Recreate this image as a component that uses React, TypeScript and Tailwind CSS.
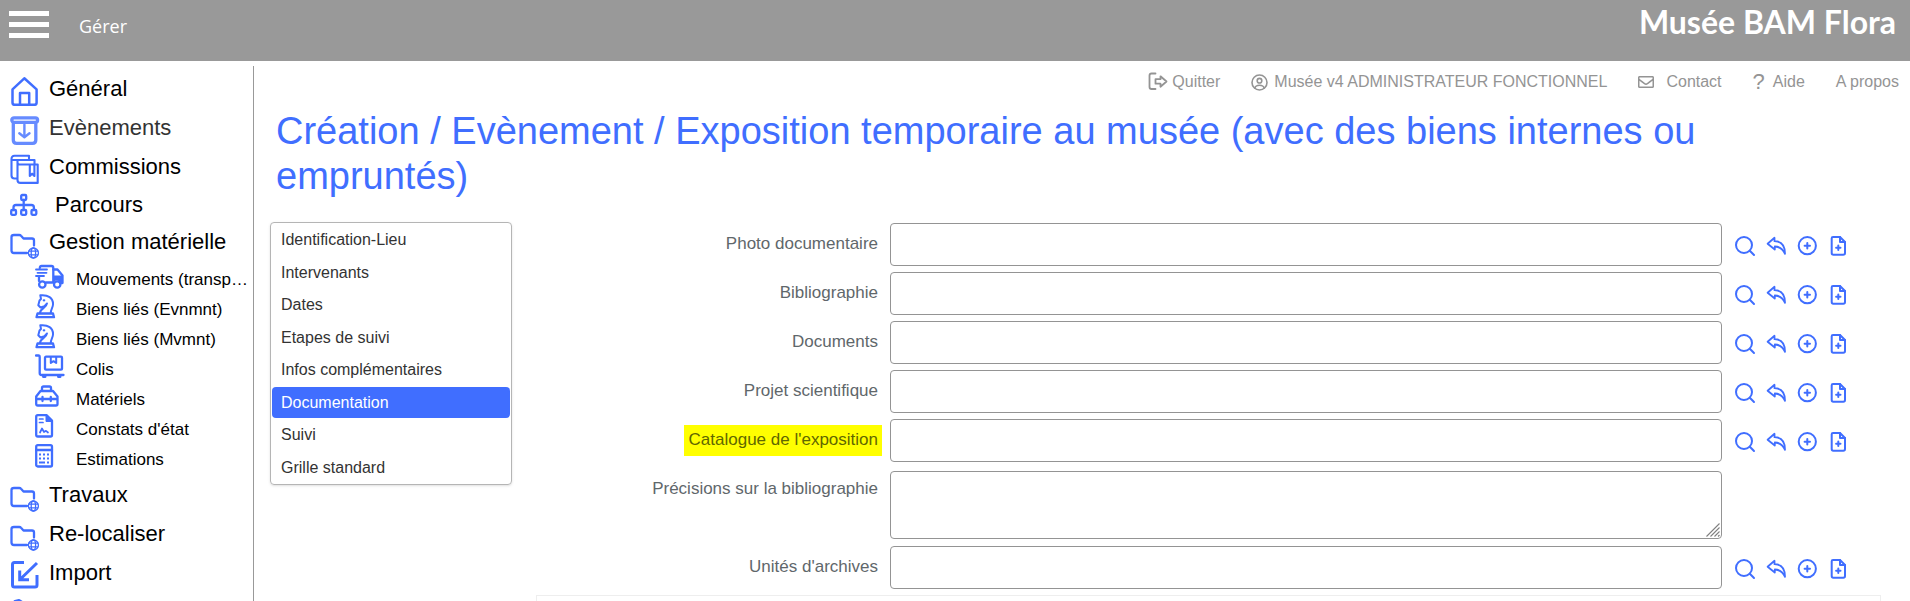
import type { ReactNode } from "react";
import { FaRegEnvelope } from "react-icons/fa";

type IconProps = { children: ReactNode; className?: string; box?: string; stroke?: number };

function Icon({ children, className = "size-[30px]", box = "0 0 30 30", stroke = 2.3 }: IconProps) {
  return (
    <svg
      viewBox={box}
      className={`${className} shrink-0`}
      fill="none"
      stroke="currentColor"
      strokeWidth={stroke}
      strokeLinecap="round"
      strokeLinejoin="round"
      aria-hidden="true"
    >
      {children}
    </svg>
  );
}

const HomeIcon = () => (
  <Icon stroke={2.5}>
    <path d="M14.3 2.3 2.5 13.4V26.5q0 2.300 2.300 2.300H24.300q2.300 0 2.300-2.300V13.400z" />
    <path d="M10 28.500V17h9.200v11.500" />
  </Icon>
);

const EventIcon = () => (
  <Icon stroke={3.3}>
    <rect x="1.800" y="2.800" width="25.800" height="4.500" rx="2.200" />
    <path d="M3.300 8V25q0 3.300 3.300 3.300H22.500q3.300 0 3.300-3.300V8" />
    <path d="M14.400 9.500V22M9.300 18.300l5.100 4 5.100-4" strokeWidth={2.400} />
  </Icon>
);

const BooksIcon = () => (
  <Icon stroke={2.1}>
    <path d="M19 4.500V1.800H4.500Q1.500 1.800 1.500 5V21.500Q1.500 24.500 4.500 24.500H7" />
    <path d="M2.500 6H24.500V10" />
    <path d="M7.500 8.500V26Q7.500 28.900 10.500 28.900H27.700V10.500H9.500Q7.500 10.500 7.500 8.500V6" />
    <path d="M19.800 11V22l2.300-2.300 2.300 2.300V11" />
  </Icon>
);

const TreeIcon = () => (
  <Icon>
    <rect x="11.200" y="3" width="5" height="5" rx="1" />
    <rect x="1.200" y="18" width="4.800" height="4.800" rx="1" />
    <rect x="11.200" y="18" width="5" height="4.800" rx="1" />
    <rect x="21.500" y="18" width="4.800" height="4.800" rx="1" />
    <path d="M13.700 8v10M3.500 18v-2.500q0-2.500 2.500-2.500h15.400q2.500 0 2.500 2.500V18" />
  </Icon>
);

const FolderIcon = () => (
  <Icon>
    <path d="M17 24H4Q1.500 24 1.500 21.500V8Q1.500 6 4 6H9.200Q10.300 6 11 6.800L13.500 9.500H22Q24 9.500 24 11.500V16.500" />
    <g strokeWidth={1.300}>
      <circle cx="23.400" cy="24" r="5" />
      <ellipse cx="23.400" cy="24" rx="2.200" ry="5" />
      <path d="M18.900 22.200h9M18.900 25.800h9" />
    </g>
  </Icon>
);

const ImportIcon = () => (
  <Icon stroke={3}>
    <path d="M14 2.500H4.500Q2.500 2.500 2.500 4.500V25Q2.500 27 4.500 27H25Q27 27 27 25V15" strokeLinecap="butt" />
    <path d="M27 3 10.500 19M9.700 10.500V19.800H19" strokeLinecap="butt" strokeLinejoin="miter" />
  </Icon>
);

const WrenchIcon = () => (
  <Icon stroke={3}>
    <path d="M5 2.500 9 1.500 13 4 16 10 26 20 21 26 10 15 6 13z" />
  </Icon>
);

const SubIcon = ({ children }: { children: ReactNode }) => (
  <Icon className="h-[26px] w-[30px]" box="0 0 30 26">
    {children}
  </Icon>
);

const TruckIcon = () => (
  <SubIcon>
    <path d="M4.800 4Q5 2 6.500 2H16.500Q18.300 2 18.300 4V18.500H11" />
    <path d="M18.300 5.500H22.500L27.500 11.500V19H26" />
    <path d="M19 11.500H27.500V18.500H25A3.500 3.500 0 0 0 19 18z" fill="currentColor" stroke="none" />
    <path d="M1 5.500H12M2.500 8.800H11.500M1 12H9" strokeWidth={1.800} />
    <path d="M4 13V17" />
    <circle cx="7.300" cy="20.500" r="3.200" />
    <circle cx="22.200" cy="20.500" r="3.200" />
  </SubIcon>
);

const KnightIcon = () => (
  <SubIcon>
    <path d="M1.500 23.200 2.500 19.500H18L19 23.200z" />
    <path d="M5 19C5 14.500 11.500 14 12 9.500L9.500 12.200 5.500 13.500 3.300 11.300 4.500 6.500 6 5 5.300 1.300C13 .5 18.300 4 18 10.500 17.900 13.500 15.800 15 15.800 19" strokeWidth={2} />
    <path d="M8.800 6.300h.4" />
  </SubIcon>
);

const TrolleyIcon = () => (
  <SubIcon>
    <path d="M1 1.500H3.500Q4.700 1.500 4.700 3V19Q4.700 21 6.500 21H28.500" />
    <rect x="10" y="2.700" width="17" height="13" rx="1" />
    <path d="M15.800 3V9l2.700-1.800L21.200 9V3" strokeWidth={2} />
    <path d="M8.500 22.500h1.500M23.500 22.500h1.500" strokeWidth={3} />
  </SubIcon>
);

const ToolboxIcon = () => (
  <SubIcon>
    <path d="M7 6.500V4Q7 2.500 8.500 2.500H14.500Q16 2.500 16 4V6.500" />
    <path d="M1.200 20V12.500L5.500 7H18L22.500 12.500V20Q22.500 21.500 21 21.500H2.700Q1.200 21.500 1.200 20z" />
    <path d="M1.500 15H22M7.500 13V17M15.800 13V17" />
  </SubIcon>
);

const ReportIcon = () => (
  <SubIcon>
    <path d="M2.700 1.200H11.500L17 6.500V21Q17 22.500 15.500 22.500H2.700Q1.200 22.500 1.200 21V2.700Q1.200 1.200 2.700 1.200z" />
    <path d="M11 1V7.500H17z" fill="currentColor" strokeWidth={1} />
    <path d="M4.500 5H8M4.500 8.500H8M5 18.500 7 14.500 9 18 11 16.800 13 18.500" strokeWidth={1.700} />
  </SubIcon>
);

const CalculatorIcon = () => (
  <SubIcon>
    <rect x="1.200" y="1.200" width="15.800" height="21.300" rx="1.500" />
    <path d="M1 6H17" />
    <path d="M4 10.500h2M8 10.500h2M12 10.500h2M4 14.500h2M8 14.500h2M12 14.500h2M4 18.500h6M12 18.500h2" strokeWidth={2} strokeLinecap="butt" />
  </SubIcon>
);

type MainItem = { label: string; icon: ReactNode; color: string; iconColor: string; height: string; indent: string };

const mainTop: MainItem[] = [
  { label: "Général", icon: <HomeIcon />, color: "text-black", iconColor: "text-[#406eff]", height: "h-[39px]", indent: "" },
  { label: "Evènements", icon: <EventIcon />, color: "text-[#333333]", iconColor: "text-[#668bff]", height: "h-[39px]", indent: "" },
  { label: "Commissions", icon: <BooksIcon />, color: "text-black", iconColor: "text-[#406eff]", height: "h-[39px]", indent: "" },
  { label: "Parcours", icon: <TreeIcon />, color: "text-black", iconColor: "text-[#406eff]", height: "h-[37px]", indent: "pl-1.5" },
  { label: "Gestion matérielle", icon: <FolderIcon />, color: "text-black", iconColor: "text-[#406eff]", height: "h-[38px]", indent: "" },
];

const mainBottom: MainItem[] = [
  { label: "Travaux", icon: <FolderIcon />, color: "text-black", iconColor: "text-[#406eff]", height: "h-[39px]", indent: "" },
  { label: "Re-localiser", icon: <FolderIcon />, color: "text-black", iconColor: "text-[#406eff]", height: "h-[39px]", indent: "" },
  { label: "Import", icon: <ImportIcon />, color: "text-black", iconColor: "text-[#406eff]", height: "h-[39px]", indent: "" },
];

const subItems = [
  { label: "Mouvements (transp…", icon: <TruckIcon /> },
  { label: "Biens liés (Evnmnt)", icon: <KnightIcon /> },
  { label: "Biens liés (Mvmnt)", icon: <KnightIcon /> },
  { label: "Colis", icon: <TrolleyIcon /> },
  { label: "Matériels", icon: <ToolboxIcon /> },
  { label: "Constats d'état", icon: <ReportIcon /> },
  { label: "Estimations", icon: <CalculatorIcon /> },
];

function MainLink({ item }: { item: MainItem }) {
  return (
    <a href="#" className={`flex items-center gap-[9px] pl-2.5 text-[22px] leading-7 whitespace-nowrap ${item.height} ${item.color}`}>
      <span className={`shrink-0 pt-1 ${item.iconColor}`}>{item.icon}</span>
      <span className={item.indent}>{item.label}</span>
    </a>
  );
}

function Sidebar() {
  return (
    <nav aria-label="Menu principal" className="mt-[5px] w-[254px] shrink-0 overflow-hidden border-r border-[#999999] pt-[3px]">
      {mainTop.map((item) => (
        <MainLink key={item.label} item={item} />
      ))}
      <div className="pt-1">
        {subItems.map((item) => (
          <a key={item.label} href="#" className="flex h-[30px] items-center gap-[11px] pl-[35px] text-[17px] leading-6 whitespace-nowrap text-black">
            <span className="shrink-0 pb-1.5 text-[#406eff]">{item.icon}</span>
            <span>{item.label}</span>
          </a>
        ))}
      </div>
      {mainBottom.map((item) => (
        <MainLink key={item.label} item={item} />
      ))}
      <a href="#" aria-label="Outils" className="flex h-[39px] items-center pt-1 pl-2.5 text-[#406eff]">
        <WrenchIcon />
      </a>
    </nav>
  );
}

function TopLinks() {
  return (
    <nav aria-label="Liens utilisateur" className="flex h-[42px] items-center justify-end gap-[31px] pr-[11px] text-[16px] leading-6 whitespace-nowrap text-[#949494]">
      <a href="#" className="flex items-center gap-1">
        <Icon className="h-5 w-5" box="0 0 20 20" stroke={1.800}>
          <path d="M7.500 1.500H3.500Q1.500 1.500 1.500 3.500V15Q1.500 17 3.500 17H7.500" />
          <path d="M7.500 7.200H12.500V4.300L18.500 9.500 12.500 14.700V11.700H7.500z" />
        </Icon>
        Quitter
      </a>
      <a href="#" className="flex items-center gap-1.5">
        <Icon className="size-[17px]" box="0 0 17 17" stroke={1.600}>
          <circle cx="8.500" cy="8.500" r="7.500" />
          <circle cx="8.500" cy="6.700" r="2.300" />
          <path d="M3.800 14.200C4.500 11.500 6 11.200 8.500 11.200S12.500 11.500 13.200 14.200" />
        </Icon>
        Musée v4 ADMINISTRATEUR FONCTIONNEL
      </a>
      <a href="#" className="flex items-center gap-3">
        <FaRegEnvelope className="size-4" aria-hidden="true" />
        Contact
      </a>
      <a href="#" className="flex items-center gap-2">
        <span className="text-[22px]" aria-hidden="true">?</span>
        Aide
      </a>
      <a href="#">A propos</a>
    </nav>
  );
}

const tabs = ["Identification-Lieu", "Intervenants", "Dates", "Etapes de suivi", "Infos complémentaires", "Documentation", "Suivi", "Grille standard"];

function SectionList() {
  return (
    <ul className="flex h-[263px] w-[242px] shrink-0 flex-col justify-between rounded border border-[#b5b5b5] p-px shadow-sm">
      {tabs.map((tab) => (
        <li key={tab}>
          <button
            type="button"
            className={`block h-[31px] w-full rounded px-[9px] pt-px text-left text-[16px] leading-6 ${
              tab === "Documentation" ? "bg-[#406eff] text-white" : "text-[#333333]"
            }`}
          >
            {tab}
          </button>
        </li>
      ))}
    </ul>
  );
}

const actions = [
  {
    name: "Rechercher",
    icon: (
      <>
        <circle cx="10" cy="10" r="8" />
        <path d="m15.800 15.800 4.200 4.200" />
      </>
    ),
  },
  {
    name: "Rétablir",
    icon: <path d="M2.600 8.800 9.500 2.800V6.200C16 6.200 20 10.500 20 18.800 18 14.500 15 11.500 9.800 11.500V14.500z" strokeWidth={1.800} />,
  },
  {
    name: "Ajouter",
    icon: (
      <>
        <circle cx="11.300" cy="10.700" r="8.600" />
        <path d="M11.300 8v5.400M8.600 10.700h5.400" />
      </>
    ),
  },
  {
    name: "Nouvelle fiche",
    icon: (
      <>
        <path d="M6 2H13L18 7V18Q18 19.700 16.300 19.700H6.300Q4.700 19.700 4.700 18V3.300Q4.700 2 6 2z" />
        <path d="M13 2V7H18" />
        <path d="M11.300 10.500v4.400M9.100 12.700h4.400" />
      </>
    ),
  },
];

type FieldDef = { id: string; label: string; highlight?: boolean; multiline?: boolean };

const fields: FieldDef[] = [
  { id: "photo", label: "Photo documentaire" },
  { id: "biblio", label: "Bibliographie" },
  { id: "docs", label: "Documents" },
  { id: "projet", label: "Projet scientifique" },
  { id: "catalogue", label: "Catalogue de l'exposition", highlight: true },
  { id: "precisions", label: "Précisions sur la bibliographie", multiline: true },
  { id: "unites", label: "Unités d'archives" },
];

function Field({ field }: { field: FieldDef }) {
  return (
    <div className={`flex items-start ${field.multiline ? "pt-[3px] pb-px" : ""}`}>
      <div className={`flex w-[346px] shrink-0 justify-end ${field.multiline ? "pt-[3px]" : "pt-1.5"}`}>
        <label
          htmlFor={field.id}
          className={`block pt-px pr-1 pb-0.5 pl-[5px] text-[17px] leading-7 whitespace-nowrap ${
            field.highlight ? "bg-[#ffff00] text-[#5f6700]" : "text-[#5f676b]"
          }`}
        >
          {field.label}
        </label>
      </div>
      {field.multiline ? (
        <div className="relative ml-2 min-w-0 flex-1">
          <textarea id={field.id} className="block h-[68px] w-full resize-none rounded border border-[#949494] px-2 py-1 text-[17px]" />
          <svg viewBox="0 0 14 14" className="pointer-events-none absolute right-0.5 bottom-0.5 size-3.5 text-[#808080]" stroke="currentColor" strokeWidth={1.100} aria-hidden="true">
            <path d="M.5 13.500 13.500.5M4.500 13.500 13.500 4.500M8.500 13.500 13.500 8.500M12 13.500 13.500 12" />
          </svg>
        </div>
      ) : (
        <input id={field.id} type="text" className="ml-2 block h-[43px] min-w-0 flex-1 rounded border border-[#949494] px-2 text-[17px]" />
      )}
      <div className="flex h-[43px] w-[159px] shrink-0 items-center gap-[9px] pt-[3px] pl-3 text-[#406eff]">
        {!field.multiline &&
          actions.map((action) => (
            <button key={action.name} type="button" aria-label={`${action.name} : ${field.label}`}>
              <Icon className="size-[22px]" box="0 0 22 22" stroke={2}>
                {action.icon}
              </Icon>
            </button>
          ))}
      </div>
    </div>
  );
}

export default function App() {
  return (
    <div className="flex h-screen flex-col overflow-hidden bg-white font-['Liberation_Sans',Arial,sans-serif]">
      <header className="flex h-[61px] shrink-0 items-start justify-between bg-[#999999] pr-3.5 pl-[9px] text-white">
        <div className="flex items-center pt-2.5">
          <button type="button" aria-label="Menu" className="flex w-10 flex-col gap-1.5">
            <span className="h-[5px] w-full bg-white" />
            <span className="h-[5px] w-full bg-white" />
            <span className="h-[5px] w-full bg-white" />
          </button>
          <a href="#" className="pt-1 pl-[30px] font-['Open_Sans',sans-serif] text-[18px] leading-6">
            Gérer
          </a>
        </div>
        <div className="pt-1 font-['Lato',sans-serif] text-[32px] leading-9 font-bold">Musée BAM Flora</div>
      </header>
      <div className="flex min-h-0 flex-1">
        <Sidebar />
        <main className="min-w-0 flex-1 overflow-hidden">
          <TopLinks />
          <h1 className="mt-1.5 pr-[29px] pl-[22px] text-[38px] leading-[45px] text-[#406eff]">
            Création / Evènement / Exposition temporaire au musée (avec des biens internes ou empruntés)
          </h1>
          <div className="flex items-start gap-6 pt-[23px] pr-[29px] pl-4">
            <SectionList />
            <form className="min-w-0 flex-1 pt-px">
              <div className="flex flex-col gap-1.5">
                {fields.map((field) => (
                  <Field key={field.id} field={field} />
                ))}
              </div>
              <div className="mt-1.5 h-24 border border-[#eeeeee]" />
            </form>
          </div>
        </main>
      </div>
    </div>
  );
}
